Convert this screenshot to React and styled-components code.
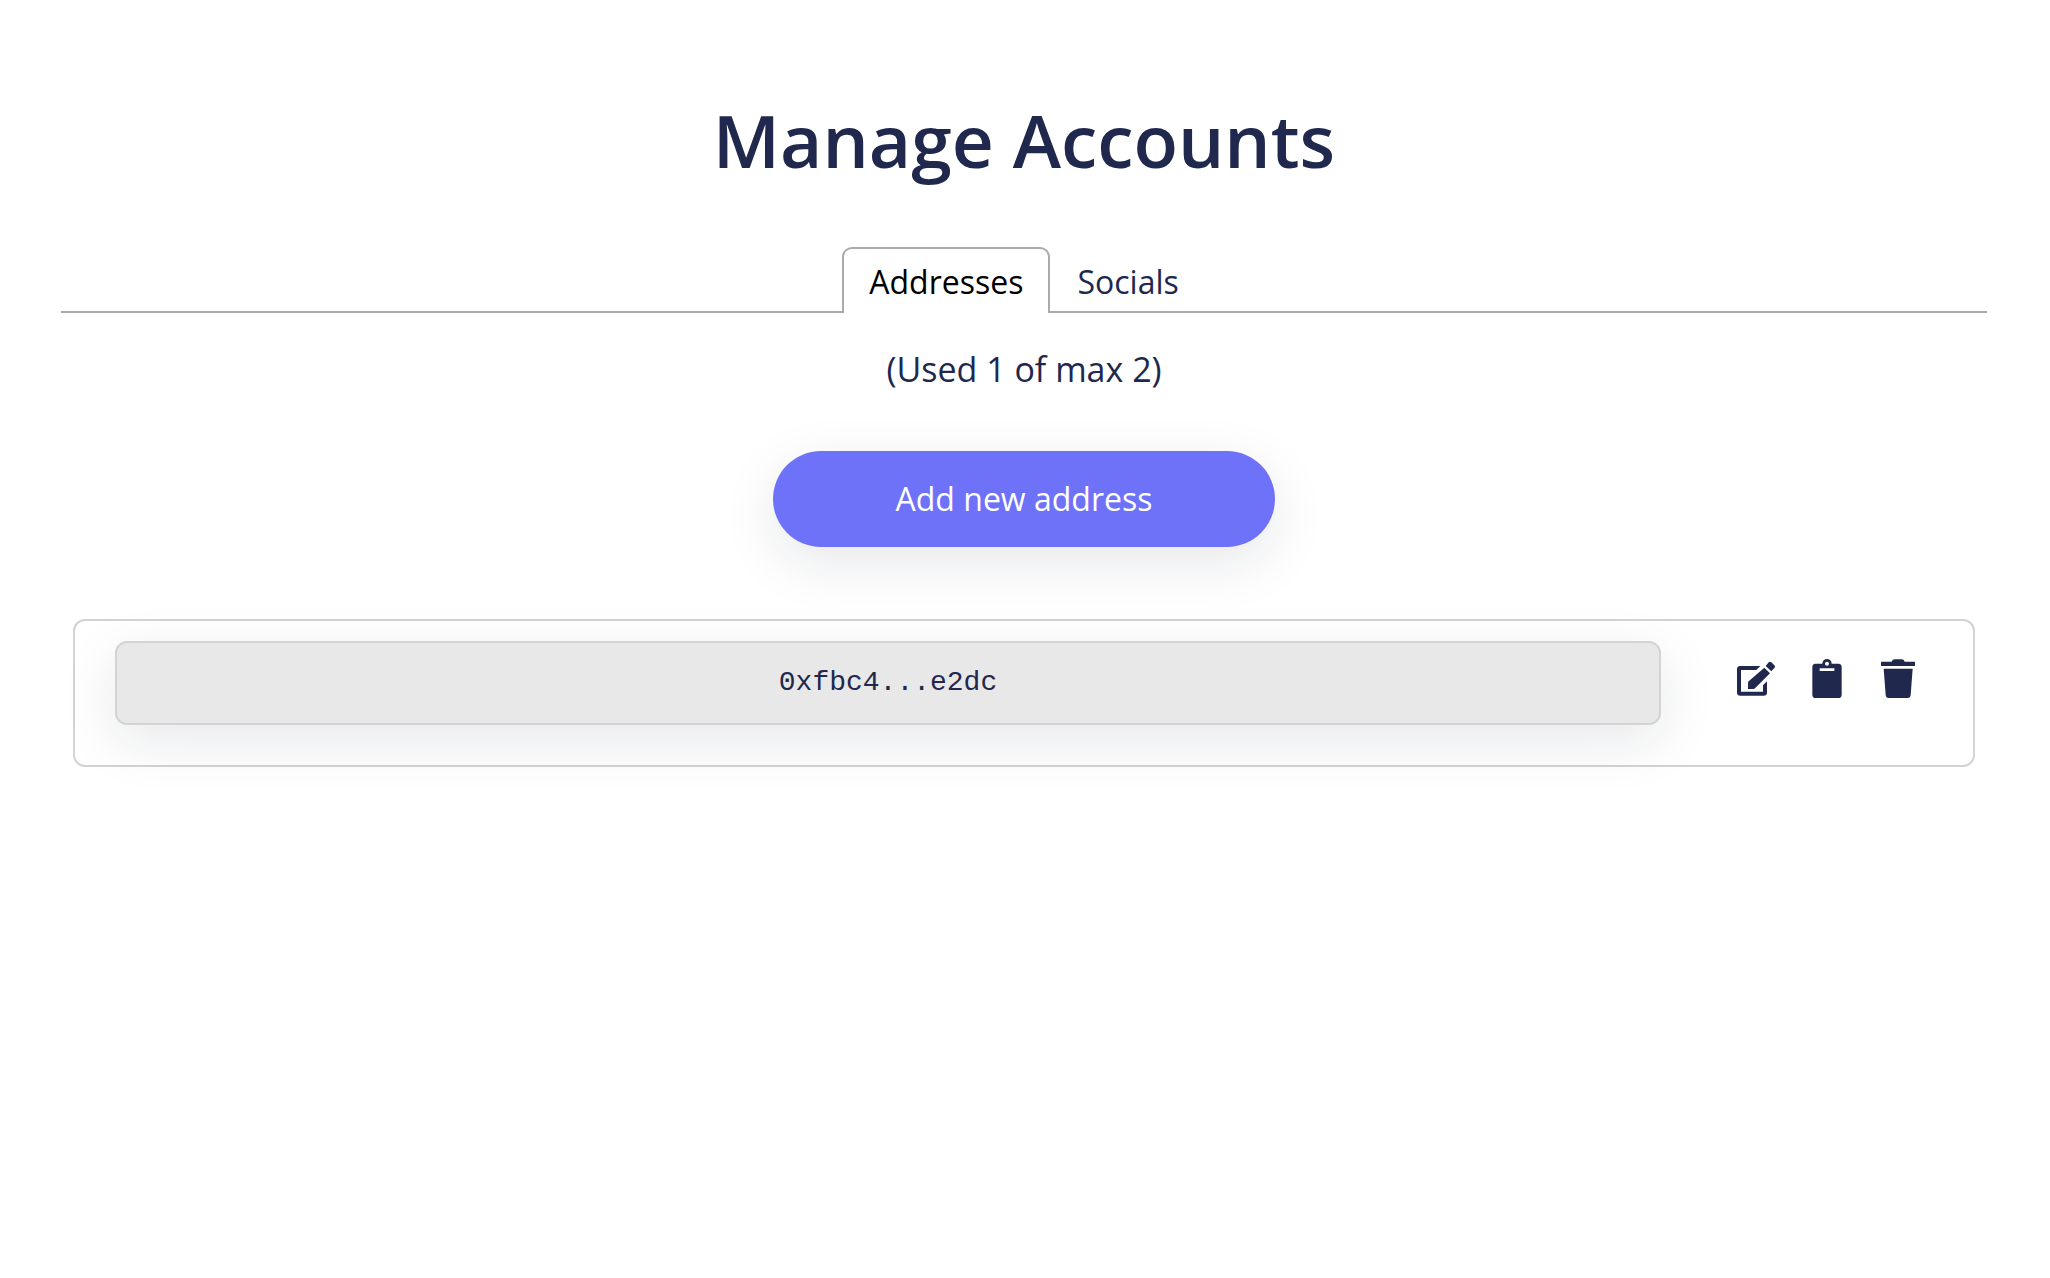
import React, { useState } from 'react';
import styled, { createGlobalStyle } from 'styled-components';

const GlobalStyle = createGlobalStyle`
    * {
        box-sizing: border-box;
    }

    body {
        margin: 0;
        background-color: #fff;
        color: #21284e;
        font-family: "Open Sans", sans-serif;
        font-size: 32px;
        line-height: 44px;
    }
`

const EditIcon = () => (
    <svg width="38" height="36" viewBox="0 0 114 108" aria-hidden="true">
        <path fill="currentColor" d="M10 15H70L58 27H12V92H78V73L90 61V95Q90 104 80 104H10Q0 104 0 95V25Q0 15 10 15Z" />
        <path fill="currentColor" d="M82 20L99 37L54 82Q52 84 49 84H33V67Q33 64 35 61Z" />
        <path fill="currentColor" d="M86 15L95 4Q99 0 103 4L112 13Q116 17 112 21L103 31Z" />
    </svg>
)

const ClipboardIcon = () => (
    <svg width="30" height="40" viewBox="0 0 90 120" aria-hidden="true">
        <path fill="currentColor" fillRule="evenodd" d="M10 14H31A14 14 0 0 1 59 14H80Q89 15 89 24V107Q89 117 79 117H11Q1 117 1 107V24Q1 15 10 14ZM45 8A6 6 0 1 0 45 20A6 6 0 1 0 45 8ZM23 28V36H67V28Z" />
    </svg>
)

const TrashIcon = () => (
    <svg width="34" height="40" viewBox="0 0 102 120" aria-hidden="true">
        <path fill="currentColor" d="M0 8H32Q34 1 42 1H62Q69 1 71 8H102V21H0ZM8 29H95L89 108Q88 117 80 117H23Q15 117 14 108Z" />
    </svg>
)

const App = () => {
    const [tab, setTab] = useState('addresses');

    return (
        <Container>
            <GlobalStyle />
            <Title>Manage Accounts</Title>
            <TabList role="tablist">
                <Tab
                    role="tab"
                    aria-selected={tab === 'addresses'}
                    $active={tab === 'addresses'}
                    onClick={() => setTab('addresses')}>
                    Addresses
                </Tab>
                <Tab
                    role="tab"
                    aria-selected={tab === 'socials'}
                    $active={tab === 'socials'}
                    onClick={() => setTab('socials')}>
                    Socials
                </Tab>
            </TabList>
            <Panel role="tabpanel">
                <Usage>(Used 1 of max 2)</Usage>
                <AddButton>Add new address</AddButton>
                <Card>
                    <Address>0xfbc4...e2dc</Address>
                    <Actions>
                        <IconButton aria-label="Edit"><EditIcon /></IconButton>
                        <IconButton aria-label="Copy"><ClipboardIcon /></IconButton>
                        <IconButton aria-label="Delete"><TrashIcon /></IconButton>
                    </Actions>
                </Card>
            </Panel>
        </Container>
    );
}

const Container = styled.main`
    padding: 92px 63px 48px 61px;
`

const Title = styled.h1`
    margin: 0 0 59px;
    font-size: 73px;
    font-weight: 600;
    line-height: 96px;
    text-align: center;
`

const TabList = styled.div`
    display: flex;
    justify-content: center;
    border-bottom: 2px solid #aaa;
`

const Tab = styled.button`
    margin-bottom: -2px;
    padding: 11px 25px 9px;
    border: 2px solid ${props => props.$active ? '#aaa' : 'transparent'};
    border-bottom: none;
    border-radius: 10px 10px 0 0;
    background: ${props => props.$active ? '#fff' : 'transparent'};
    color: ${props => props.$active ? '#000' : 'inherit'};
    font: inherit;
    cursor: pointer;
`

const Panel = styled.div`
    display: flex;
    flex-direction: column;
    align-items: center;
    padding: 34px 12px 0;
`

const Usage = styled.p`
    margin: 0 0 60px;
    font-size: 34px;
`

const AddButton = styled.button`
    width: 502px;
    height: 96px;
    margin-bottom: 72px;
    border: none;
    border-radius: 48px;
    background-color: #6e72f8;
    box-shadow: 0 16px 56px rgba(20, 30, 45, 0.1);
    color: #fff;
    font: inherit;
    font-weight: 500;
    cursor: pointer;
`

const Card = styled.section`
    display: flex;
    align-items: flex-start;
    align-self: stretch;
    padding: 20px 55px 40px 40px;
    border: 2px solid #d3d3d3;
    border-radius: 12px;
`

const Address = styled.div`
    flex: 1;
    padding: 18px 24px;
    border: 2px solid #d3d3d3;
    border-radius: 12px;
    background-color: #e8e8e8;
    box-shadow: 0 16px 56px rgba(20, 30, 45, 0.1);
    font-family: "Liberation Mono", monospace;
    font-size: 28px;
    text-align: center;
`

const Actions = styled.div`
    display: flex;
    align-items: center;
    gap: 31px;
    height: 76px;
    margin-left: 75px;
`

const IconButton = styled.button`
    display: flex;
    justify-content: center;
    width: 40px;
    padding: 0;
    border: none;
    background: none;
    color: #21284e;
    cursor: pointer;
`

export default App;
